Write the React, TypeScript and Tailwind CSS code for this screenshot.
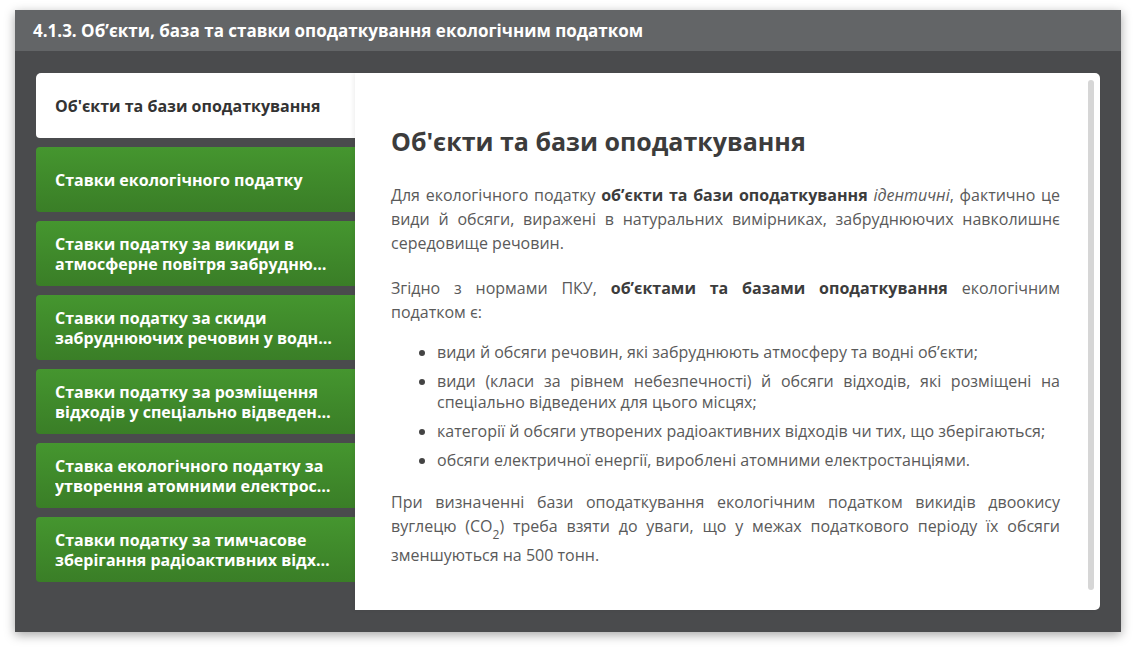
const tabs: [string, string][] = [
  ["Ставки екологічного податку", ""],
  ["Ставки податку за викиди в", "атмосферне повітря забруднюючих речовин стаціонарними джерелами"],
  ["Ставки податку за скиди", "забруднюючих речовин у водні об'єкти"],
  ["Ставки податку за розміщення", "відходів у спеціально відведених для цього місцях"],
  ["Ставка екологічного податку за", "утворення атомними електростанціями радіоактивних відходів"],
  ["Ставки податку за тимчасове", "зберігання радіоактивних відходів їх виробниками"],
];

const bullets = [
  "види й обсяги речовин, які забруднюють атмосферу та водні об’єкти;",
  "види (класи за рівнем небезпечності) й обсяги відходів, які розміщені на спеціально відведених для цього місцях;",
  "категорії й обсяги утворених радіоактивних відходів чи тих, що зберігаються;",
  "обсяги електричної енергії, вироблені атомними електростанціями.",
];

const App: React.FC = () => {
  const font = "font-['Open_Sans',_'Liberation_Sans',_sans-serif]";
  const tabStyle =
    "h-[65px] rounded-l-[4px] flex flex-col justify-center pl-[19px] pr-[22px] text-[16px] leading-[20px] font-bold";
  return (
    <div className={`${font} bg-white w-[1136px] h-[653px] pt-[10px] pl-[15px]`}>
      <div className="w-[1106px] h-[622px] flex flex-col shadow-[0_3px_10px_rgba(0,0,0,0.35)]">
        <div className="h-[41px] bg-[#636567] flex items-center px-[18px] text-white text-[17px] font-bold">
          4.1.3. Об’єкти, база та ставки оподаткування екологічним податком
        </div>
        <div className="flex-1 bg-[#4a4b4d] flex pl-[21px] pt-[22px]">
          <div className="w-[319px] flex flex-col gap-[9px]">
            <div className={`${tabStyle} bg-white text-[#333] rounded-tl-[5px]`}>
              Об'єкти та бази оподаткування
            </div>
            {tabs.map(([a, b]) => (
              <div
                key={a}
                className={`${tabStyle} bg-linear-to-b from-[#45962f] to-[#3a7e27] text-white`}
              >
                <span className="whitespace-nowrap">{a}</span>
                {b && <span className="truncate">{b}</span>}
              </div>
            ))}
          </div>
          <div className="relative w-[745px] h-[537px] bg-white rounded-r-[5px] shadow-[-2px_0_4px_rgba(0,0,0,0.06)] pl-[36px] pr-[40px] pt-[49px] text-[16px] leading-[24px] text-[#5a5a5a] text-justify">
            <h2 className="text-[25px] leading-[38px] font-bold text-[#3c3c3c] text-left mb-[23px]">
              Об'єкти та бази оподаткування
            </h2>
            <p className="mb-[21px]">
              Для екологічного податку{" "}
              <b className="text-[#3c3c3c]">об’єкти та бази оподаткування</b>{" "}
              <i>ідентичні</i>, фактично це види й обсяги, виражені в натуральних
              вимірниках, забруднюючих навколишнє середовище речовин.
            </p>
            <p className="mb-[18px]">
              Згідно з нормами ПКУ,{" "}
              <b className="text-[#3c3c3c]">об’єктами та базами оподаткування</b>{" "}
              екологічним податком є:
            </p>
            <ul className="list-disc pl-[46px] flex flex-col gap-[8px] mb-[19px] leading-[21px] marker:text-[#444]">
              {bullets.map((b) => (
                <li key={b}>{b}</li>
              ))}
            </ul>
            <p>
              При визначенні бази оподаткування екологічним податком викидів
              двоокису вуглецю (СО
              <sub className="text-[12px] leading-[16px] bottom-0 align-[-7px]">2</sub>) треба
              взяти до уваги, що у межах податкового періоду їх обсяги
              зменшуються на 500 тонн.
            </p>
            <div className="absolute right-[6px] top-[7px] w-[6px] h-[510px] rounded-full bg-[#d6d6d6]" />
          </div>
        </div>
      </div>
    </div>
  );
};

export default App;
